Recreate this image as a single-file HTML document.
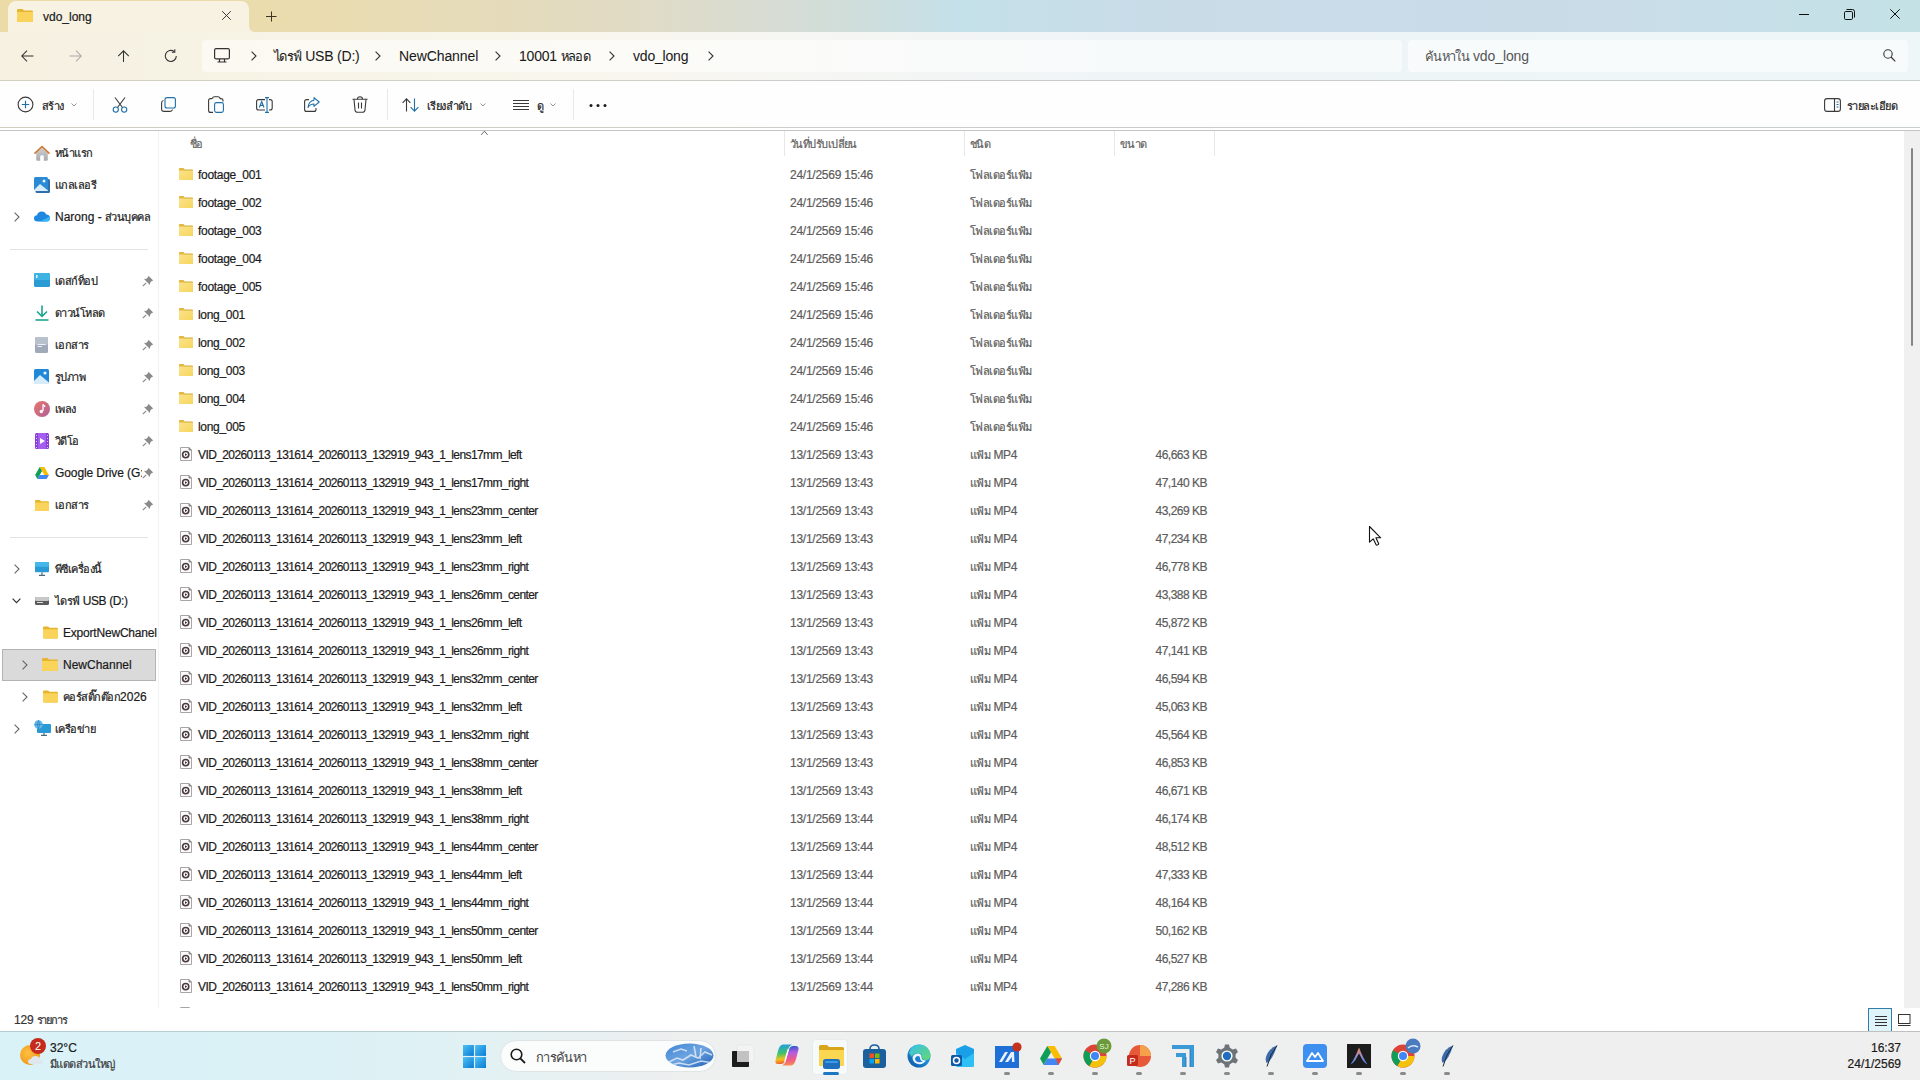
<!DOCTYPE html>
<html><head><meta charset="utf-8">
<style>
*{margin:0;padding:0;box-sizing:border-box}
html,body{width:1920px;height:1080px;overflow:hidden;background:#fff;font-family:"Liberation Sans",sans-serif;font-size:12px;color:#1a1a1a;-webkit-text-stroke:0.2px currentColor}
.abs{position:absolute}
i.t{font-style:normal;font-size:0.917em;letter-spacing:-0.05em}
#status i.t{letter-spacing:-1.1px}
#title{position:absolute;left:0;top:0;width:1920px;height:32px;background:linear-gradient(90deg,#ecdba6 0px,#eadcae 300px,#e2dbc2 600px,#dbdcce 720px,#cfdedc 860px,#c4e0e9 960px,#c8dce8 1150px,#cadbe8 1550px,#c6e0e8 1800px,#c4e2e6 1920px)}
#tab{position:absolute;left:8px;top:1px;width:241px;height:32px;background:#f7f2e2;border-radius:8px 8px 0 0}
#addr{position:absolute;left:0;top:32px;width:1920px;height:48px;background:linear-gradient(90deg,#f6f1e1 0px,#f7f3e5 250px,#f9f6ee 600px,#f5f6f4 850px,#eff4f6 1100px,#eef5f7 1500px,#eef6f8 1920px)}
#addrsep{position:absolute;left:0;top:80px;width:1920px;height:1px;background:linear-gradient(90deg,#d3d0bf 0%,#d0cfc6 30%,#c9cbcb 50%,#c8cfd1 100%)}
#addrbox{position:absolute;left:202px;top:40px;width:1200px;height:32px;background:rgba(255,255,255,0.5);border-radius:4px}
#searchbox{position:absolute;left:1408px;top:40px;width:500px;height:32px;background:rgba(255,255,255,0.6);border-radius:4px}
#cmd{position:absolute;left:0;top:81px;width:1920px;height:47px;background:#fefefe}
#cmdsep{position:absolute;left:0;top:127px;width:1920px;height:1px;background:linear-gradient(90deg,#d0cdbf 0%,#cfcec6 30%,#c9cccc 55%,#c8cecd 100%)}
#cmdsep2{position:absolute;left:0;top:130px;width:1920px;height:1px;background:#c4c4c4}
.vdiv{position:absolute;width:1px;background:#e8e8e8}
.row{position:absolute;left:160px;width:1740px;height:28px}
.row .fi{position:absolute;left:20px;top:7px}
.row span{position:absolute;top:1px;line-height:28px;white-space:nowrap}
.row .ff{left:19px;top:8px}
.row .nf{letter-spacing:-0.3px}
.tp{letter-spacing:-0.3px}
.tf{letter-spacing:-0.7px}
.nm{left:38px;color:#1b1b1b;letter-spacing:-0.6px}
.dt{left:630px;color:#5c5c5c;letter-spacing:-0.25px}
.tp{left:810px;color:#5c5c5c}
.sz{left:960px;width:87px;text-align:right;color:#5c5c5c;letter-spacing:-0.5px}
#list{position:absolute;left:159px;top:129px;width:1745px;height:879px;overflow:hidden}
#list .row{left:1px}
.hdr{position:absolute;top:135px;line-height:18px;color:#5f5f5f;font-size:12px}
.side{position:absolute;left:0;height:32px;line-height:32px;white-space:nowrap;font-size:12px;color:#1a1a1a}
#taskbar{position:absolute;left:0;top:1032px;width:1920px;height:48px;background:linear-gradient(90deg,#d9f2f8 0px,#dbf1f6 300px,#e0f1f4 450px,#e8f0f1 580px,#eeefef 680px,#efefef 1920px);}
#tbline{position:absolute;left:0;top:1031px;width:1920px;height:1px;background:linear-gradient(90deg,#b3cdd4 0px,#bccfd3 500px,#c2c6c7 800px,#c0c0c0 1920px)}
</style></head><body>

<div id="title"></div>
<div id="tab"></div>
<div class="abs" style="left:249px;top:26px;width:6px;height:6px;background:#f7f2e2"></div><div class="abs" style="left:249px;top:25px;width:6px;height:7px;background:#eadcae;border-bottom-left-radius:6px"></div>
<!-- tab folder icon -->
<svg class="abs" style="left:17px;top:9px" width="16" height="13" viewBox="0 0 16 13"><path d="M0 1.2 Q0 0 1.2 0 H5.5 L7 1.5 H14.8 Q16 1.5 16 2.7 V11.8 Q16 13 14.8 13 H1.2 Q0 13 0 11.8Z" fill="#e6b52e"/><path d="M0 3 H16 V11.8 Q16 13 14.8 13 H1.2 Q0 13 0 11.8Z" fill="#fad35a"/></svg>
<div class="abs" style="left:43px;top:9px;font-size:12px;line-height:16px;color:#1a1a1a">vdo_long</div>
<svg class="abs" style="left:221px;top:10px" width="11" height="11" viewBox="0 0 11 11"><path d="M1.2 1.2 L9.8 9.8 M9.8 1.2 L1.2 9.8" stroke="#2a2a2a" stroke-width="0.9"/></svg>
<svg class="abs" style="left:265px;top:11px" width="12" height="11" viewBox="0 0 12 11"><path d="M6.5 0.5 V10.5 M1 5.5 H11.5" stroke="#3a3520" stroke-width="1"/></svg>
<!-- window controls -->
<svg class="abs" style="left:1799px;top:13px" width="10" height="2" viewBox="0 0 10 2"><path d="M0 1.5 H10" stroke="#111" stroke-width="1"/></svg>
<svg class="abs" style="left:1844px;top:9px" width="11" height="11" viewBox="0 0 11 11"><rect x="0.5" y="2.5" width="8" height="8" rx="1.2" fill="none" stroke="#111" stroke-width="1"/><path d="M2.5 0.5 H8.5 Q10.5 0.5 10.5 2.5 V8.5" fill="none" stroke="#111" stroke-width="1"/></svg>
<svg class="abs" style="left:1890px;top:9px" width="10" height="10" viewBox="0 0 10 10"><path d="M0.3 0.3 L9.7 9.7 M9.7 0.3 L0.3 9.7" stroke="#111" stroke-width="1"/></svg>

<div id="addr"></div>
<div id="addrbox"></div>
<div id="searchbox"></div>
<div id="addrsep"></div>
<!-- nav icons -->
<svg class="abs" style="left:21px;top:50px" width="13" height="12" viewBox="0 0 13 12"><path d="M12.5 6 H1 M6 0.7 L0.8 6 L6 11.3" fill="none" stroke="#333" stroke-width="1.05"/></svg>
<svg class="abs" style="left:69px;top:50px" width="13" height="12" viewBox="0 0 13 12"><path d="M0.5 6 H12 M7 0.7 L12.2 6 L7 11.3" fill="none" stroke="#aaa" stroke-width="1.05"/></svg>
<svg class="abs" style="left:117px;top:50px" width="13" height="12" viewBox="0 0 13 12"><path d="M6.5 12 V1 M1.2 6.2 L6.5 0.8 L11.8 6.2" fill="none" stroke="#333" stroke-width="1.05"/></svg>
<svg class="abs" style="left:164px;top:49px" width="14" height="14" viewBox="0 0 14 14"><path d="M12.3 7 A5.5 5.5 0 1 1 10.2 2.6" fill="none" stroke="#333" stroke-width="1.1"/><path d="M10.8 0.3 V3.2 H7.9" fill="none" stroke="#333" stroke-width="1.1"/></svg>
<!-- addr pc icon -->
<svg class="abs" style="left:214px;top:48px" width="16" height="15" viewBox="0 0 16 15"><rect x="0.6" y="0.6" width="14.8" height="10.3" rx="1.5" fill="none" stroke="#333" stroke-width="1.2"/><path d="M5.5 11 V13.8 M10.5 11 V13.8 M3.5 14 H12.5" stroke="#333" stroke-width="1.2"/></svg>
<div id="crumbs" class="abs" style="left:0;top:46px;font-size:14px;line-height:20px;color:#1a1a1a;white-space:nowrap;-webkit-text-stroke:0.05px currentColor">
<span class="abs" style="left:274px;letter-spacing:-0.2px"><i class="t">ไดรฟ์</i> USB (D:)</span>
<span class="abs" style="left:399px;letter-spacing:-0.1px">NewChannel</span>
<span class="abs" style="left:519px;letter-spacing:-0.2px">10001 <i class="t">หลอด</i></span>
<span class="abs" style="left:633px;letter-spacing:-0.2px">vdo_long</span>
</div>
<svg class="abs" style="left:251px;top:51px" width="6" height="10" viewBox="0 0 6 10"><path d="M0.6 0.6 L5 5 L0.6 9.4" fill="none" stroke="#333" stroke-width="1.1"/></svg>
<svg class="abs" style="left:375px;top:51px" width="6" height="10" viewBox="0 0 6 10"><path d="M0.6 0.6 L5 5 L0.6 9.4" fill="none" stroke="#333" stroke-width="1.1"/></svg>
<svg class="abs" style="left:495px;top:51px" width="6" height="10" viewBox="0 0 6 10"><path d="M0.6 0.6 L5 5 L0.6 9.4" fill="none" stroke="#333" stroke-width="1.1"/></svg>
<svg class="abs" style="left:609px;top:51px" width="6" height="10" viewBox="0 0 6 10"><path d="M0.6 0.6 L5 5 L0.6 9.4" fill="none" stroke="#333" stroke-width="1.1"/></svg>
<svg class="abs" style="left:708px;top:51px" width="6" height="10" viewBox="0 0 6 10"><path d="M0.6 0.6 L5 5 L0.6 9.4" fill="none" stroke="#333" stroke-width="1.1"/></svg>
<div class="abs" style="left:1425px;top:46px;font-size:14px;line-height:20px;color:#555;white-space:nowrap;letter-spacing:-0.1px;-webkit-text-stroke:0"><i class="t">ค้นหาใน</i> vdo_long</div>
<svg class="abs" style="left:1883px;top:49px" width="13" height="13" viewBox="0 0 13 13"><circle cx="5" cy="5" r="4.2" fill="none" stroke="#333" stroke-width="1.1"/><path d="M8 8 L12.3 12.3" stroke="#333" stroke-width="1.2"/></svg>

<div id="cmd"></div>
<div id="cmdsep"></div><div id="cmdsep2"></div>
<div class="vdiv" style="left:93px;top:89px;height:31px"></div>
<div class="vdiv" style="left:387px;top:89px;height:31px"></div>
<div class="vdiv" style="left:573px;top:89px;height:31px"></div>
<!-- new -->
<svg class="abs" style="left:17px;top:96px" width="17" height="17" viewBox="0 0 17 17"><circle cx="8.5" cy="8.5" r="7.4" fill="none" stroke="#3a3a3a" stroke-width="1.1"/><path d="M8.5 4.8 V12.2 M4.8 8.5 H12.2" stroke="#1f6fa8" stroke-width="1.2"/></svg>
<div class="abs" style="left:42px;top:98px;font-size:12px;line-height:16px;color:#1a1a1a"><i class="t">สร้าง</i></div>
<svg class="abs" style="left:71px;top:103px" width="6" height="4" viewBox="0 0 6 4"><path d="M0.5 0.5 L3 3 L5.5 0.5" fill="none" stroke="#888" stroke-width="0.9"/></svg>
<!-- cut -->
<svg class="abs" style="left:112px;top:97px" width="16" height="16" viewBox="0 0 16 16"><path d="M3 0.5 L10.5 10.5 M13 0.5 L5.5 10.5" stroke="#3a3a3a" stroke-width="1.1" fill="none"/><circle cx="3.8" cy="12.6" r="2.6" fill="none" stroke="#1f6fa8" stroke-width="1.1"/><circle cx="12.2" cy="12.6" r="2.6" fill="none" stroke="#1f6fa8" stroke-width="1.1"/></svg>
<!-- copy -->
<svg class="abs" style="left:161px;top:97px" width="15" height="15" viewBox="0 0 15 15"><path d="M2.5 3.5 Q0.6 3.8 0.6 6 V12 Q0.6 14.4 3 14.4 H9 Q11.2 14.4 11.5 12.5" fill="none" stroke="#3a3a3a" stroke-width="1.1"/><rect x="4" y="0.6" width="10.4" height="10.4" rx="2" fill="none" stroke="#1f6fa8" stroke-width="1.1"/></svg>
<!-- paste -->
<svg class="abs" style="left:208px;top:96px" width="16" height="17" viewBox="0 0 16 17"><path d="M4 2.6 H2.6 Q0.6 2.6 0.6 4.6 V14.4 Q0.6 16.4 2.6 16.4 H5" fill="none" stroke="#3a3a3a" stroke-width="1.1"/><path d="M4.5 2.8 Q4.5 0.8 6.5 0.8 H10 Q12 0.8 12 2.8" fill="none" stroke="#3a3a3a" stroke-width="1.1"/><path d="M12 2.6 H13 Q15 2.6 15 4.6 V5.5" fill="none" stroke="#3a3a3a" stroke-width="1.1"/><rect x="6.6" y="6.6" width="8.8" height="9.8" rx="1.8" fill="none" stroke="#1f6fa8" stroke-width="1.1"/></svg>
<!-- rename -->
<svg class="abs" style="left:256px;top:97px" width="17" height="16" viewBox="0 0 17 16"><path d="M9 2.6 H2.6 Q0.6 2.6 0.6 4.6 V11 Q0.6 13 2.6 13 H9" fill="none" stroke="#3a3a3a" stroke-width="1.1"/><path d="M13 2.6 H14 Q16.2 2.6 16.2 4.6 V11 Q16.2 13 14 13 H13" fill="none" stroke="#3a3a3a" stroke-width="1.1"/><path d="M11 0.6 V15.4 M9 0.6 H13 M9 15.4 H13" stroke="#1f6fa8" stroke-width="1.1"/><path d="M3.3 10.5 L5.7 4.6 L8 10.5 M4.2 8.4 H7.2" fill="none" stroke="#1f6fa8" stroke-width="1.1"/></svg>
<!-- share -->
<svg class="abs" style="left:304px;top:97px" width="16" height="15" viewBox="0 0 16 15"><path d="M5 2.6 H2.6 Q0.6 2.6 0.6 4.6 V12.4 Q0.6 14.4 2.6 14.4 H10 Q12 14.4 12 12.4 V11" fill="none" stroke="#3a3a3a" stroke-width="1.1"/><path d="M10 0.6 L15.2 5 L10 9.4 V7 Q6 7 4 10.5 Q4.5 4 10 3.2Z" fill="none" stroke="#1f6fa8" stroke-width="1.1" stroke-linejoin="round"/></svg>
<!-- delete -->
<svg class="abs" style="left:352px;top:96px" width="16" height="17" viewBox="0 0 16 17"><path d="M0.5 3.2 H15.5 M5.5 3 Q5.5 0.7 8 0.7 Q10.5 0.7 10.5 3" fill="none" stroke="#3a3a3a" stroke-width="1.1"/><path d="M2 3.2 L3 14 Q3.2 16.3 5.5 16.3 H10.5 Q12.8 16.3 13 14 L14 3.2" fill="none" stroke="#3a3a3a" stroke-width="1.1"/><path d="M6.5 6.5 V12.5 M9.5 6.5 V12.5" stroke="#3a3a3a" stroke-width="1.1"/></svg>
<!-- sort -->
<svg class="abs" style="left:402px;top:98px" width="17" height="14" viewBox="0 0 17 14"><path d="M4.5 13.5 V1 M0.6 4.8 L4.5 0.8 L8.4 4.8" fill="none" stroke="#3a3a3a" stroke-width="1.1"/><path d="M12.5 0.5 V13 M8.6 9.2 L12.5 13.2 L16.4 9.2" fill="none" stroke="#1f6fa8" stroke-width="1.1"/></svg>
<div class="abs" style="left:427px;top:98px;font-size:12px;line-height:16px;color:#1a1a1a;letter-spacing:-0.3px"><i class="t">เรียงลำดับ</i></div>
<svg class="abs" style="left:480px;top:103px" width="6" height="4" viewBox="0 0 6 4"><path d="M0.5 0.5 L3 3 L5.5 0.5" fill="none" stroke="#888" stroke-width="0.9"/></svg>
<!-- view -->
<svg class="abs" style="left:513px;top:99px" width="16" height="12" viewBox="0 0 16 12"><path d="M0 1.5 H16 M0 4.5 H16 M0 7.5 H16 M0 10.5 H16" stroke="#3a3a3a" stroke-width="1"/></svg>
<div class="abs" style="left:537px;top:98px;font-size:12px;line-height:16px;color:#1a1a1a"><i class="t">ดู</i></div>
<svg class="abs" style="left:550px;top:103px" width="6" height="4" viewBox="0 0 6 4"><path d="M0.5 0.5 L3 3 L5.5 0.5" fill="none" stroke="#888" stroke-width="0.9"/></svg>
<!-- more -->
<svg class="abs" style="left:589px;top:103px" width="18" height="5" viewBox="0 0 18 5"><circle cx="2" cy="2.5" r="1.5" fill="#1a1a1a"/><circle cx="9" cy="2.5" r="1.5" fill="#1a1a1a"/><circle cx="16" cy="2.5" r="1.5" fill="#1a1a1a"/></svg>
<!-- details -->
<svg class="abs" style="left:1824px;top:98px" width="17" height="14" viewBox="0 0 17 14"><rect x="0.6" y="0.6" width="15.8" height="12.8" rx="2.5" fill="none" stroke="#3a3a3a" stroke-width="1.1"/><path d="M10.5 0.6 V13.4" stroke="#3a3a3a" stroke-width="1.1"/><path d="M12.5 4 H14.5 M12.5 6.5 H14.5 M12.5 9 H14.5" stroke="#1f6fa8" stroke-width="1"/></svg>
<div class="abs" style="left:1847px;top:98px;font-size:12px;line-height:16px;color:#1a1a1a;letter-spacing:-0.3px"><i class="t">รายละเอียด</i></div>


<!-- header -->
<div class="hdr" style="left:190px"><i class="t">ชื่อ</i></div>
<svg class="abs" style="left:480px;top:130px" width="9" height="6" viewBox="0 0 9 6"><path d="M1.2 4.8 L4.4 1.2 L7.6 4.8" fill="none" stroke="#555" stroke-width="0.9"/></svg>
<div class="hdr" style="left:790px"><i class="t">วันที่ปรับเปลี่ยน</i></div>
<div class="hdr" style="left:970px"><i class="t">ชนิด</i></div>
<div class="hdr" style="left:1120px"><i class="t">ขนาด</i></div>
<div class="vdiv" style="left:784px;top:131px;height:25px;background:#e8e8e8"></div>
<div class="vdiv" style="left:964px;top:131px;height:25px;background:#e8e8e8"></div>
<div class="vdiv" style="left:1114px;top:131px;height:25px;background:#e8e8e8"></div>
<div class="vdiv" style="left:1214px;top:131px;height:25px;background:#e8e8e8"></div>

<div id="list">
<div class="row" style="top:31px"><svg class="fi ff" width="14" height="12" viewBox="0 0 14 12"><defs><linearGradient id="fg" x1="0" y1="0" x2="1" y2="1"><stop offset="0" stop-color="#fbe28a"/><stop offset="1" stop-color="#f6d65e"/></linearGradient></defs><path d="M0 0.8 Q0 0 0.8 0 H4.6 L5.6 1.6 H13.2 Q14 1.6 14 2.4 V11.2 Q14 12 13.2 12 H0.8 Q0 12 0 11.2Z" fill="#e3b73e"/><path d="M0 2.6 H14 V11.2 Q14 12 13.2 12 H0.8 Q0 12 0 11.2Z" fill="url(#fg)"/><path d="M5.2 2.3 H14" stroke="#d6bf63" stroke-width="0.8"/></svg><span class="nm nf">footage_001</span><span class="dt">24/1/2569 15:46</span><span class="tp tf"><i class="t">โฟลเดอร์แฟ้ม</i></span><span class="sz"></span></div>
<div class="row" style="top:59px"><svg class="fi ff" width="14" height="12" viewBox="0 0 14 12"><defs><linearGradient id="fg" x1="0" y1="0" x2="1" y2="1"><stop offset="0" stop-color="#fbe28a"/><stop offset="1" stop-color="#f6d65e"/></linearGradient></defs><path d="M0 0.8 Q0 0 0.8 0 H4.6 L5.6 1.6 H13.2 Q14 1.6 14 2.4 V11.2 Q14 12 13.2 12 H0.8 Q0 12 0 11.2Z" fill="#e3b73e"/><path d="M0 2.6 H14 V11.2 Q14 12 13.2 12 H0.8 Q0 12 0 11.2Z" fill="url(#fg)"/><path d="M5.2 2.3 H14" stroke="#d6bf63" stroke-width="0.8"/></svg><span class="nm nf">footage_002</span><span class="dt">24/1/2569 15:46</span><span class="tp tf"><i class="t">โฟลเดอร์แฟ้ม</i></span><span class="sz"></span></div>
<div class="row" style="top:87px"><svg class="fi ff" width="14" height="12" viewBox="0 0 14 12"><defs><linearGradient id="fg" x1="0" y1="0" x2="1" y2="1"><stop offset="0" stop-color="#fbe28a"/><stop offset="1" stop-color="#f6d65e"/></linearGradient></defs><path d="M0 0.8 Q0 0 0.8 0 H4.6 L5.6 1.6 H13.2 Q14 1.6 14 2.4 V11.2 Q14 12 13.2 12 H0.8 Q0 12 0 11.2Z" fill="#e3b73e"/><path d="M0 2.6 H14 V11.2 Q14 12 13.2 12 H0.8 Q0 12 0 11.2Z" fill="url(#fg)"/><path d="M5.2 2.3 H14" stroke="#d6bf63" stroke-width="0.8"/></svg><span class="nm nf">footage_003</span><span class="dt">24/1/2569 15:46</span><span class="tp tf"><i class="t">โฟลเดอร์แฟ้ม</i></span><span class="sz"></span></div>
<div class="row" style="top:115px"><svg class="fi ff" width="14" height="12" viewBox="0 0 14 12"><defs><linearGradient id="fg" x1="0" y1="0" x2="1" y2="1"><stop offset="0" stop-color="#fbe28a"/><stop offset="1" stop-color="#f6d65e"/></linearGradient></defs><path d="M0 0.8 Q0 0 0.8 0 H4.6 L5.6 1.6 H13.2 Q14 1.6 14 2.4 V11.2 Q14 12 13.2 12 H0.8 Q0 12 0 11.2Z" fill="#e3b73e"/><path d="M0 2.6 H14 V11.2 Q14 12 13.2 12 H0.8 Q0 12 0 11.2Z" fill="url(#fg)"/><path d="M5.2 2.3 H14" stroke="#d6bf63" stroke-width="0.8"/></svg><span class="nm nf">footage_004</span><span class="dt">24/1/2569 15:46</span><span class="tp tf"><i class="t">โฟลเดอร์แฟ้ม</i></span><span class="sz"></span></div>
<div class="row" style="top:143px"><svg class="fi ff" width="14" height="12" viewBox="0 0 14 12"><defs><linearGradient id="fg" x1="0" y1="0" x2="1" y2="1"><stop offset="0" stop-color="#fbe28a"/><stop offset="1" stop-color="#f6d65e"/></linearGradient></defs><path d="M0 0.8 Q0 0 0.8 0 H4.6 L5.6 1.6 H13.2 Q14 1.6 14 2.4 V11.2 Q14 12 13.2 12 H0.8 Q0 12 0 11.2Z" fill="#e3b73e"/><path d="M0 2.6 H14 V11.2 Q14 12 13.2 12 H0.8 Q0 12 0 11.2Z" fill="url(#fg)"/><path d="M5.2 2.3 H14" stroke="#d6bf63" stroke-width="0.8"/></svg><span class="nm nf">footage_005</span><span class="dt">24/1/2569 15:46</span><span class="tp tf"><i class="t">โฟลเดอร์แฟ้ม</i></span><span class="sz"></span></div>
<div class="row" style="top:171px"><svg class="fi ff" width="14" height="12" viewBox="0 0 14 12"><defs><linearGradient id="fg" x1="0" y1="0" x2="1" y2="1"><stop offset="0" stop-color="#fbe28a"/><stop offset="1" stop-color="#f6d65e"/></linearGradient></defs><path d="M0 0.8 Q0 0 0.8 0 H4.6 L5.6 1.6 H13.2 Q14 1.6 14 2.4 V11.2 Q14 12 13.2 12 H0.8 Q0 12 0 11.2Z" fill="#e3b73e"/><path d="M0 2.6 H14 V11.2 Q14 12 13.2 12 H0.8 Q0 12 0 11.2Z" fill="url(#fg)"/><path d="M5.2 2.3 H14" stroke="#d6bf63" stroke-width="0.8"/></svg><span class="nm nf">long_001</span><span class="dt">24/1/2569 15:46</span><span class="tp tf"><i class="t">โฟลเดอร์แฟ้ม</i></span><span class="sz"></span></div>
<div class="row" style="top:199px"><svg class="fi ff" width="14" height="12" viewBox="0 0 14 12"><defs><linearGradient id="fg" x1="0" y1="0" x2="1" y2="1"><stop offset="0" stop-color="#fbe28a"/><stop offset="1" stop-color="#f6d65e"/></linearGradient></defs><path d="M0 0.8 Q0 0 0.8 0 H4.6 L5.6 1.6 H13.2 Q14 1.6 14 2.4 V11.2 Q14 12 13.2 12 H0.8 Q0 12 0 11.2Z" fill="#e3b73e"/><path d="M0 2.6 H14 V11.2 Q14 12 13.2 12 H0.8 Q0 12 0 11.2Z" fill="url(#fg)"/><path d="M5.2 2.3 H14" stroke="#d6bf63" stroke-width="0.8"/></svg><span class="nm nf">long_002</span><span class="dt">24/1/2569 15:46</span><span class="tp tf"><i class="t">โฟลเดอร์แฟ้ม</i></span><span class="sz"></span></div>
<div class="row" style="top:227px"><svg class="fi ff" width="14" height="12" viewBox="0 0 14 12"><defs><linearGradient id="fg" x1="0" y1="0" x2="1" y2="1"><stop offset="0" stop-color="#fbe28a"/><stop offset="1" stop-color="#f6d65e"/></linearGradient></defs><path d="M0 0.8 Q0 0 0.8 0 H4.6 L5.6 1.6 H13.2 Q14 1.6 14 2.4 V11.2 Q14 12 13.2 12 H0.8 Q0 12 0 11.2Z" fill="#e3b73e"/><path d="M0 2.6 H14 V11.2 Q14 12 13.2 12 H0.8 Q0 12 0 11.2Z" fill="url(#fg)"/><path d="M5.2 2.3 H14" stroke="#d6bf63" stroke-width="0.8"/></svg><span class="nm nf">long_003</span><span class="dt">24/1/2569 15:46</span><span class="tp tf"><i class="t">โฟลเดอร์แฟ้ม</i></span><span class="sz"></span></div>
<div class="row" style="top:255px"><svg class="fi ff" width="14" height="12" viewBox="0 0 14 12"><defs><linearGradient id="fg" x1="0" y1="0" x2="1" y2="1"><stop offset="0" stop-color="#fbe28a"/><stop offset="1" stop-color="#f6d65e"/></linearGradient></defs><path d="M0 0.8 Q0 0 0.8 0 H4.6 L5.6 1.6 H13.2 Q14 1.6 14 2.4 V11.2 Q14 12 13.2 12 H0.8 Q0 12 0 11.2Z" fill="#e3b73e"/><path d="M0 2.6 H14 V11.2 Q14 12 13.2 12 H0.8 Q0 12 0 11.2Z" fill="url(#fg)"/><path d="M5.2 2.3 H14" stroke="#d6bf63" stroke-width="0.8"/></svg><span class="nm nf">long_004</span><span class="dt">24/1/2569 15:46</span><span class="tp tf"><i class="t">โฟลเดอร์แฟ้ม</i></span><span class="sz"></span></div>
<div class="row" style="top:283px"><svg class="fi ff" width="14" height="12" viewBox="0 0 14 12"><defs><linearGradient id="fg" x1="0" y1="0" x2="1" y2="1"><stop offset="0" stop-color="#fbe28a"/><stop offset="1" stop-color="#f6d65e"/></linearGradient></defs><path d="M0 0.8 Q0 0 0.8 0 H4.6 L5.6 1.6 H13.2 Q14 1.6 14 2.4 V11.2 Q14 12 13.2 12 H0.8 Q0 12 0 11.2Z" fill="#e3b73e"/><path d="M0 2.6 H14 V11.2 Q14 12 13.2 12 H0.8 Q0 12 0 11.2Z" fill="url(#fg)"/><path d="M5.2 2.3 H14" stroke="#d6bf63" stroke-width="0.8"/></svg><span class="nm nf">long_005</span><span class="dt">24/1/2569 15:46</span><span class="tp tf"><i class="t">โฟลเดอร์แฟ้ม</i></span><span class="sz"></span></div>
<div class="row" style="top:311px"><svg class="fi" width="12" height="14" viewBox="0 0 12 14"><path d="M0.5 0.5 H9 L11.5 3 V13.5 H0.5Z" fill="#fdfbfd" stroke="#a6a6a6" stroke-width="1"/><path d="M9 0.5 V3 H11.5" fill="#888" stroke="#8a8a8a" stroke-width="1"/><circle cx="5.7" cy="7.6" r="3.1" fill="none" stroke="#4a3a3c" stroke-width="1.6"/><path d="M5 6.2 L7.2 7.6 L5 9Z" fill="#3a2c30"/></svg><span class="nm">VID_20260113_131614_20260113_132919_943_1_lens17mm_left</span><span class="dt">13/1/2569 13:43</span><span class="tp"><i class="t">แฟ้ม</i> MP4</span><span class="sz">46,663 KB</span></div>
<div class="row" style="top:339px"><svg class="fi" width="12" height="14" viewBox="0 0 12 14"><path d="M0.5 0.5 H9 L11.5 3 V13.5 H0.5Z" fill="#fdfbfd" stroke="#a6a6a6" stroke-width="1"/><path d="M9 0.5 V3 H11.5" fill="#888" stroke="#8a8a8a" stroke-width="1"/><circle cx="5.7" cy="7.6" r="3.1" fill="none" stroke="#4a3a3c" stroke-width="1.6"/><path d="M5 6.2 L7.2 7.6 L5 9Z" fill="#3a2c30"/></svg><span class="nm">VID_20260113_131614_20260113_132919_943_1_lens17mm_right</span><span class="dt">13/1/2569 13:43</span><span class="tp"><i class="t">แฟ้ม</i> MP4</span><span class="sz">47,140 KB</span></div>
<div class="row" style="top:367px"><svg class="fi" width="12" height="14" viewBox="0 0 12 14"><path d="M0.5 0.5 H9 L11.5 3 V13.5 H0.5Z" fill="#fdfbfd" stroke="#a6a6a6" stroke-width="1"/><path d="M9 0.5 V3 H11.5" fill="#888" stroke="#8a8a8a" stroke-width="1"/><circle cx="5.7" cy="7.6" r="3.1" fill="none" stroke="#4a3a3c" stroke-width="1.6"/><path d="M5 6.2 L7.2 7.6 L5 9Z" fill="#3a2c30"/></svg><span class="nm">VID_20260113_131614_20260113_132919_943_1_lens23mm_center</span><span class="dt">13/1/2569 13:43</span><span class="tp"><i class="t">แฟ้ม</i> MP4</span><span class="sz">43,269 KB</span></div>
<div class="row" style="top:395px"><svg class="fi" width="12" height="14" viewBox="0 0 12 14"><path d="M0.5 0.5 H9 L11.5 3 V13.5 H0.5Z" fill="#fdfbfd" stroke="#a6a6a6" stroke-width="1"/><path d="M9 0.5 V3 H11.5" fill="#888" stroke="#8a8a8a" stroke-width="1"/><circle cx="5.7" cy="7.6" r="3.1" fill="none" stroke="#4a3a3c" stroke-width="1.6"/><path d="M5 6.2 L7.2 7.6 L5 9Z" fill="#3a2c30"/></svg><span class="nm">VID_20260113_131614_20260113_132919_943_1_lens23mm_left</span><span class="dt">13/1/2569 13:43</span><span class="tp"><i class="t">แฟ้ม</i> MP4</span><span class="sz">47,234 KB</span></div>
<div class="row" style="top:423px"><svg class="fi" width="12" height="14" viewBox="0 0 12 14"><path d="M0.5 0.5 H9 L11.5 3 V13.5 H0.5Z" fill="#fdfbfd" stroke="#a6a6a6" stroke-width="1"/><path d="M9 0.5 V3 H11.5" fill="#888" stroke="#8a8a8a" stroke-width="1"/><circle cx="5.7" cy="7.6" r="3.1" fill="none" stroke="#4a3a3c" stroke-width="1.6"/><path d="M5 6.2 L7.2 7.6 L5 9Z" fill="#3a2c30"/></svg><span class="nm">VID_20260113_131614_20260113_132919_943_1_lens23mm_right</span><span class="dt">13/1/2569 13:43</span><span class="tp"><i class="t">แฟ้ม</i> MP4</span><span class="sz">46,778 KB</span></div>
<div class="row" style="top:451px"><svg class="fi" width="12" height="14" viewBox="0 0 12 14"><path d="M0.5 0.5 H9 L11.5 3 V13.5 H0.5Z" fill="#fdfbfd" stroke="#a6a6a6" stroke-width="1"/><path d="M9 0.5 V3 H11.5" fill="#888" stroke="#8a8a8a" stroke-width="1"/><circle cx="5.7" cy="7.6" r="3.1" fill="none" stroke="#4a3a3c" stroke-width="1.6"/><path d="M5 6.2 L7.2 7.6 L5 9Z" fill="#3a2c30"/></svg><span class="nm">VID_20260113_131614_20260113_132919_943_1_lens26mm_center</span><span class="dt">13/1/2569 13:43</span><span class="tp"><i class="t">แฟ้ม</i> MP4</span><span class="sz">43,388 KB</span></div>
<div class="row" style="top:479px"><svg class="fi" width="12" height="14" viewBox="0 0 12 14"><path d="M0.5 0.5 H9 L11.5 3 V13.5 H0.5Z" fill="#fdfbfd" stroke="#a6a6a6" stroke-width="1"/><path d="M9 0.5 V3 H11.5" fill="#888" stroke="#8a8a8a" stroke-width="1"/><circle cx="5.7" cy="7.6" r="3.1" fill="none" stroke="#4a3a3c" stroke-width="1.6"/><path d="M5 6.2 L7.2 7.6 L5 9Z" fill="#3a2c30"/></svg><span class="nm">VID_20260113_131614_20260113_132919_943_1_lens26mm_left</span><span class="dt">13/1/2569 13:43</span><span class="tp"><i class="t">แฟ้ม</i> MP4</span><span class="sz">45,872 KB</span></div>
<div class="row" style="top:507px"><svg class="fi" width="12" height="14" viewBox="0 0 12 14"><path d="M0.5 0.5 H9 L11.5 3 V13.5 H0.5Z" fill="#fdfbfd" stroke="#a6a6a6" stroke-width="1"/><path d="M9 0.5 V3 H11.5" fill="#888" stroke="#8a8a8a" stroke-width="1"/><circle cx="5.7" cy="7.6" r="3.1" fill="none" stroke="#4a3a3c" stroke-width="1.6"/><path d="M5 6.2 L7.2 7.6 L5 9Z" fill="#3a2c30"/></svg><span class="nm">VID_20260113_131614_20260113_132919_943_1_lens26mm_right</span><span class="dt">13/1/2569 13:43</span><span class="tp"><i class="t">แฟ้ม</i> MP4</span><span class="sz">47,141 KB</span></div>
<div class="row" style="top:535px"><svg class="fi" width="12" height="14" viewBox="0 0 12 14"><path d="M0.5 0.5 H9 L11.5 3 V13.5 H0.5Z" fill="#fdfbfd" stroke="#a6a6a6" stroke-width="1"/><path d="M9 0.5 V3 H11.5" fill="#888" stroke="#8a8a8a" stroke-width="1"/><circle cx="5.7" cy="7.6" r="3.1" fill="none" stroke="#4a3a3c" stroke-width="1.6"/><path d="M5 6.2 L7.2 7.6 L5 9Z" fill="#3a2c30"/></svg><span class="nm">VID_20260113_131614_20260113_132919_943_1_lens32mm_center</span><span class="dt">13/1/2569 13:43</span><span class="tp"><i class="t">แฟ้ม</i> MP4</span><span class="sz">46,594 KB</span></div>
<div class="row" style="top:563px"><svg class="fi" width="12" height="14" viewBox="0 0 12 14"><path d="M0.5 0.5 H9 L11.5 3 V13.5 H0.5Z" fill="#fdfbfd" stroke="#a6a6a6" stroke-width="1"/><path d="M9 0.5 V3 H11.5" fill="#888" stroke="#8a8a8a" stroke-width="1"/><circle cx="5.7" cy="7.6" r="3.1" fill="none" stroke="#4a3a3c" stroke-width="1.6"/><path d="M5 6.2 L7.2 7.6 L5 9Z" fill="#3a2c30"/></svg><span class="nm">VID_20260113_131614_20260113_132919_943_1_lens32mm_left</span><span class="dt">13/1/2569 13:43</span><span class="tp"><i class="t">แฟ้ม</i> MP4</span><span class="sz">45,063 KB</span></div>
<div class="row" style="top:591px"><svg class="fi" width="12" height="14" viewBox="0 0 12 14"><path d="M0.5 0.5 H9 L11.5 3 V13.5 H0.5Z" fill="#fdfbfd" stroke="#a6a6a6" stroke-width="1"/><path d="M9 0.5 V3 H11.5" fill="#888" stroke="#8a8a8a" stroke-width="1"/><circle cx="5.7" cy="7.6" r="3.1" fill="none" stroke="#4a3a3c" stroke-width="1.6"/><path d="M5 6.2 L7.2 7.6 L5 9Z" fill="#3a2c30"/></svg><span class="nm">VID_20260113_131614_20260113_132919_943_1_lens32mm_right</span><span class="dt">13/1/2569 13:43</span><span class="tp"><i class="t">แฟ้ม</i> MP4</span><span class="sz">45,564 KB</span></div>
<div class="row" style="top:619px"><svg class="fi" width="12" height="14" viewBox="0 0 12 14"><path d="M0.5 0.5 H9 L11.5 3 V13.5 H0.5Z" fill="#fdfbfd" stroke="#a6a6a6" stroke-width="1"/><path d="M9 0.5 V3 H11.5" fill="#888" stroke="#8a8a8a" stroke-width="1"/><circle cx="5.7" cy="7.6" r="3.1" fill="none" stroke="#4a3a3c" stroke-width="1.6"/><path d="M5 6.2 L7.2 7.6 L5 9Z" fill="#3a2c30"/></svg><span class="nm">VID_20260113_131614_20260113_132919_943_1_lens38mm_center</span><span class="dt">13/1/2569 13:43</span><span class="tp"><i class="t">แฟ้ม</i> MP4</span><span class="sz">46,853 KB</span></div>
<div class="row" style="top:647px"><svg class="fi" width="12" height="14" viewBox="0 0 12 14"><path d="M0.5 0.5 H9 L11.5 3 V13.5 H0.5Z" fill="#fdfbfd" stroke="#a6a6a6" stroke-width="1"/><path d="M9 0.5 V3 H11.5" fill="#888" stroke="#8a8a8a" stroke-width="1"/><circle cx="5.7" cy="7.6" r="3.1" fill="none" stroke="#4a3a3c" stroke-width="1.6"/><path d="M5 6.2 L7.2 7.6 L5 9Z" fill="#3a2c30"/></svg><span class="nm">VID_20260113_131614_20260113_132919_943_1_lens38mm_left</span><span class="dt">13/1/2569 13:43</span><span class="tp"><i class="t">แฟ้ม</i> MP4</span><span class="sz">46,671 KB</span></div>
<div class="row" style="top:675px"><svg class="fi" width="12" height="14" viewBox="0 0 12 14"><path d="M0.5 0.5 H9 L11.5 3 V13.5 H0.5Z" fill="#fdfbfd" stroke="#a6a6a6" stroke-width="1"/><path d="M9 0.5 V3 H11.5" fill="#888" stroke="#8a8a8a" stroke-width="1"/><circle cx="5.7" cy="7.6" r="3.1" fill="none" stroke="#4a3a3c" stroke-width="1.6"/><path d="M5 6.2 L7.2 7.6 L5 9Z" fill="#3a2c30"/></svg><span class="nm">VID_20260113_131614_20260113_132919_943_1_lens38mm_right</span><span class="dt">13/1/2569 13:44</span><span class="tp"><i class="t">แฟ้ม</i> MP4</span><span class="sz">46,174 KB</span></div>
<div class="row" style="top:703px"><svg class="fi" width="12" height="14" viewBox="0 0 12 14"><path d="M0.5 0.5 H9 L11.5 3 V13.5 H0.5Z" fill="#fdfbfd" stroke="#a6a6a6" stroke-width="1"/><path d="M9 0.5 V3 H11.5" fill="#888" stroke="#8a8a8a" stroke-width="1"/><circle cx="5.7" cy="7.6" r="3.1" fill="none" stroke="#4a3a3c" stroke-width="1.6"/><path d="M5 6.2 L7.2 7.6 L5 9Z" fill="#3a2c30"/></svg><span class="nm">VID_20260113_131614_20260113_132919_943_1_lens44mm_center</span><span class="dt">13/1/2569 13:44</span><span class="tp"><i class="t">แฟ้ม</i> MP4</span><span class="sz">48,512 KB</span></div>
<div class="row" style="top:731px"><svg class="fi" width="12" height="14" viewBox="0 0 12 14"><path d="M0.5 0.5 H9 L11.5 3 V13.5 H0.5Z" fill="#fdfbfd" stroke="#a6a6a6" stroke-width="1"/><path d="M9 0.5 V3 H11.5" fill="#888" stroke="#8a8a8a" stroke-width="1"/><circle cx="5.7" cy="7.6" r="3.1" fill="none" stroke="#4a3a3c" stroke-width="1.6"/><path d="M5 6.2 L7.2 7.6 L5 9Z" fill="#3a2c30"/></svg><span class="nm">VID_20260113_131614_20260113_132919_943_1_lens44mm_left</span><span class="dt">13/1/2569 13:44</span><span class="tp"><i class="t">แฟ้ม</i> MP4</span><span class="sz">47,333 KB</span></div>
<div class="row" style="top:759px"><svg class="fi" width="12" height="14" viewBox="0 0 12 14"><path d="M0.5 0.5 H9 L11.5 3 V13.5 H0.5Z" fill="#fdfbfd" stroke="#a6a6a6" stroke-width="1"/><path d="M9 0.5 V3 H11.5" fill="#888" stroke="#8a8a8a" stroke-width="1"/><circle cx="5.7" cy="7.6" r="3.1" fill="none" stroke="#4a3a3c" stroke-width="1.6"/><path d="M5 6.2 L7.2 7.6 L5 9Z" fill="#3a2c30"/></svg><span class="nm">VID_20260113_131614_20260113_132919_943_1_lens44mm_right</span><span class="dt">13/1/2569 13:44</span><span class="tp"><i class="t">แฟ้ม</i> MP4</span><span class="sz">48,164 KB</span></div>
<div class="row" style="top:787px"><svg class="fi" width="12" height="14" viewBox="0 0 12 14"><path d="M0.5 0.5 H9 L11.5 3 V13.5 H0.5Z" fill="#fdfbfd" stroke="#a6a6a6" stroke-width="1"/><path d="M9 0.5 V3 H11.5" fill="#888" stroke="#8a8a8a" stroke-width="1"/><circle cx="5.7" cy="7.6" r="3.1" fill="none" stroke="#4a3a3c" stroke-width="1.6"/><path d="M5 6.2 L7.2 7.6 L5 9Z" fill="#3a2c30"/></svg><span class="nm">VID_20260113_131614_20260113_132919_943_1_lens50mm_center</span><span class="dt">13/1/2569 13:44</span><span class="tp"><i class="t">แฟ้ม</i> MP4</span><span class="sz">50,162 KB</span></div>
<div class="row" style="top:815px"><svg class="fi" width="12" height="14" viewBox="0 0 12 14"><path d="M0.5 0.5 H9 L11.5 3 V13.5 H0.5Z" fill="#fdfbfd" stroke="#a6a6a6" stroke-width="1"/><path d="M9 0.5 V3 H11.5" fill="#888" stroke="#8a8a8a" stroke-width="1"/><circle cx="5.7" cy="7.6" r="3.1" fill="none" stroke="#4a3a3c" stroke-width="1.6"/><path d="M5 6.2 L7.2 7.6 L5 9Z" fill="#3a2c30"/></svg><span class="nm">VID_20260113_131614_20260113_132919_943_1_lens50mm_left</span><span class="dt">13/1/2569 13:44</span><span class="tp"><i class="t">แฟ้ม</i> MP4</span><span class="sz">46,527 KB</span></div>
<div class="row" style="top:843px"><svg class="fi" width="12" height="14" viewBox="0 0 12 14"><path d="M0.5 0.5 H9 L11.5 3 V13.5 H0.5Z" fill="#fdfbfd" stroke="#a6a6a6" stroke-width="1"/><path d="M9 0.5 V3 H11.5" fill="#888" stroke="#8a8a8a" stroke-width="1"/><circle cx="5.7" cy="7.6" r="3.1" fill="none" stroke="#4a3a3c" stroke-width="1.6"/><path d="M5 6.2 L7.2 7.6 L5 9Z" fill="#3a2c30"/></svg><span class="nm">VID_20260113_131614_20260113_132919_943_1_lens50mm_right</span><span class="dt">13/1/2569 13:44</span><span class="tp"><i class="t">แฟ้ม</i> MP4</span><span class="sz">47,286 KB</span></div>
<div class="row" style="top:871px"><svg class="fi" width="12" height="14" viewBox="0 0 12 14"><path d="M0.5 0.5 H9 L11.5 3 V13.5 H0.5Z" fill="#fdfbfd" stroke="#a6a6a6" stroke-width="1"/><path d="M9 0.5 V3 H11.5" fill="#888" stroke="#8a8a8a" stroke-width="1"/><circle cx="5.7" cy="7.6" r="3.1" fill="none" stroke="#4a3a3c" stroke-width="1.6"/><path d="M5 6.2 L7.2 7.6 L5 9Z" fill="#3a2c30"/></svg><span class="nm">VID_20260113_131614_20260113_132919_943_1_lens56mm_center</span><span class="dt">13/1/2569 13:44</span><span class="tp"><i class="t">แฟ้ม</i> MP4</span><span class="sz">47,000 KB</span></div>
</div>

<!-- sidebar divider -->
<div class="vdiv" style="left:158px;top:131px;height:877px;background:#f2f2f4"></div>
<!-- sidebar -->
<svg class="abs" style="left:34px;top:145px" width="16" height="16" viewBox="0 0 16 16"><defs><linearGradient id="hb" x1="0" y1="0" x2="0" y2="1"><stop offset="0" stop-color="#d2d2d2"/><stop offset="1" stop-color="#a9a9a9"/></linearGradient></defs><path d="M2.2 7.2 V14.5 Q2.2 15.8 3.5 15.8 H6.2 V11.5 Q6.2 10.3 8 10.3 Q9.8 10.3 9.8 11.5 V15.8 H12.5 Q13.8 15.8 13.8 14.5 V7.2 L8 2Z" fill="url(#hb)"/><path d="M1 8.2 L8 1.5 L15 8.2" fill="none" stroke="#d07a34" stroke-width="1.6" stroke-linejoin="round" stroke-linecap="round"/></svg>
<div class="side" style="top:137px;left:55px"><i class="t">หน้าแรก</i></div>
<svg class="abs" style="left:34px;top:177px" width="16" height="16" viewBox="0 0 16 16"><rect x="1.5" y="2" width="14.5" height="14" rx="1.5" fill="#2f6fae"/><rect x="0" y="0" width="14" height="14" rx="1.5" fill="#2a8ad6"/><path d="M0 13 L6 7 L14 13.5 V14 H0Z" fill="#d8ecfa"/><circle cx="10" cy="4" r="1.5" fill="#e8f4fc"/></svg>
<div class="side" style="top:169px;left:55px"><i class="t">แกลเลอรี</i></div>
<svg class="abs" style="left:14px;top:212px" width="6" height="10" viewBox="0 0 6 10"><path d="M0.6 0.6 L5 5 L0.6 9.4" fill="none" stroke="#666" stroke-width="1.1"/></svg>
<svg class="abs" style="left:34px;top:211px" width="16" height="11" viewBox="0 0 16 11"><path d="M3.5 10.5 Q0 10.5 0 7.3 Q0 4.5 3 4.2 Q4 0.5 7.8 0.5 Q11 0.5 12.3 3.5 Q16 3.8 16 7.2 Q16 10.5 12.5 10.5Z" fill="#1e88e0"/><path d="M6 10.5 L16 5.5 Q16.2 10.5 12.5 10.5Z" fill="#35b8f5"/></svg>
<div class="side" style="top:201px;left:55px">Narong - <i class="t">ส่วนบุคคล</i></div>
<div class="abs" style="left:10px;top:249px;width:138px;height:1px;background:#e3e3e3"></div>

<svg class="abs" style="left:34px;top:273px" width="16" height="14" viewBox="0 0 16 14"><rect x="0" y="0" width="16" height="14" rx="1.5" fill="#2a9bd3"/><rect x="0" y="0" width="16" height="7" rx="1.5" fill="#3fb2e4"/><rect x="2" y="2" width="1.5" height="3" fill="#e6f5fc"/></svg>
<div class="side" style="top:265px;left:55px"><i class="t">เดสก์ท็อป</i></div>
<svg class="abs" style="left:35px;top:305px" width="14" height="16" viewBox="0 0 14 16"><path d="M7 0.5 V11 M2 6.5 L7 11.3 L12 6.5" fill="none" stroke="#1ba58f" stroke-width="1.6"/><path d="M0.5 15 H13.5" stroke="#1ba58f" stroke-width="1.6"/></svg>
<div class="side" style="top:297px;left:55px"><i class="t">ดาวน์โหลด</i></div>
<svg class="abs" style="left:35px;top:337px" width="13" height="16" viewBox="0 0 13 16"><rect x="0" y="0" width="13" height="16" rx="1.5" fill="#9fa9b8"/><rect x="0" y="0" width="13" height="8" rx="1.5" fill="#b8c0cc"/><path d="M2.5 7.5 H10.5 M2.5 9.5 H7" stroke="#eef" stroke-width="1.2"/></svg>
<div class="side" style="top:329px;left:55px"><i class="t">เอกสาร</i></div>
<svg class="abs" style="left:34px;top:369px" width="15" height="15" viewBox="0 0 15 15"><rect x="0" y="0" width="15" height="15" rx="1.5" fill="#2088d8"/><path d="M0 12 L6 6 L15 13.5 V15 H0Z" fill="#d6ecfb"/><circle cx="11" cy="4" r="1.6" fill="#e8f4fc"/></svg>
<div class="side" style="top:361px;left:55px"><i class="t">รูปภาพ</i></div>
<svg class="abs" style="left:34px;top:401px" width="16" height="16" viewBox="0 0 16 16"><defs><linearGradient id="mg" x1="0" y1="0" x2="1" y2="1"><stop offset="0" stop-color="#e8766a"/><stop offset="1" stop-color="#b0609a"/></linearGradient></defs><circle cx="8" cy="8" r="8" fill="url(#mg)"/><path d="M9 3.5 V10" stroke="#fff" stroke-width="1.3"/><circle cx="7.3" cy="10.5" r="1.7" fill="#fff"/><path d="M9 3.5 Q10.5 4.5 11 6" fill="none" stroke="#fff" stroke-width="1.2"/></svg>
<div class="side" style="top:393px;left:55px"><i class="t">เพลง</i></div>
<svg class="abs" style="left:35px;top:433px" width="14" height="16" viewBox="0 0 14 16"><rect x="0" y="0" width="14" height="16" rx="1.5" fill="#8a3fd8"/><rect x="3" y="0" width="8" height="16" fill="#a45ef0"/><path d="M5 5 L10 8 L5 11Z" fill="#fff"/><path d="M1.5 2 V3 M1.5 5 V6 M1.5 8 V9 M1.5 11 V12 M1.5 14 V15 M12.5 2 V3 M12.5 5 V6 M12.5 8 V9 M12.5 11 V12 M12.5 14 V15" stroke="#e0c8ff" stroke-width="1"/></svg>
<div class="side" style="top:425px;left:55px"><i class="t">วิดีโอ</i></div>
<svg class="abs" style="left:35px;top:467px" width="14" height="12" viewBox="0 0 16 14"><path d="M5.3 0 H10.7 L16 9.2 L13.3 14 L8 4.6Z" fill="#fbbc04"/><path d="M5.3 0 L8 4.6 L2.7 14 L0 9.2Z" fill="#0f9d58"/><path d="M2.7 14 H13.3 L16 9.2 H5.3Z" fill="#4285f4"/></svg>
<div class="side" style="top:457px;left:55px;width:87px;overflow:hidden;letter-spacing:-0.1px">Google Drive (G:</div>
<svg class="abs" style="left:35px;top:500px" width="14" height="11" viewBox="0 0 16 13" preserveAspectRatio="none"><path d="M0 1.2 Q0 0 1.2 0 H5.5 L7 1.5 H14.8 Q16 1.5 16 2.7 V11.8 Q16 13 14.8 13 H1.2 Q0 13 0 11.8Z" fill="#e6b52e"/><path d="M0 3 H16 V11.8 Q16 13 14.8 13 H1.2 Q0 13 0 11.8Z" fill="#fad35a"/></svg>
<div class="side" style="top:489px;left:55px"><i class="t">เอกสาร</i></div>
<svg class="abs" style="left:142px;top:275px" width="12" height="12" viewBox="0 0 12 12"><path d="M6.5 0.8 L11.2 5.5 L9.8 6 L8.2 7.6 L8 10 L2 4 L4.4 3.8 L6 2.2Z" fill="#8a8a8a"/><path d="M4.2 7.8 L0.8 11.2" stroke="#8a8a8a" stroke-width="1.2"/></svg>
<svg class="abs" style="left:142px;top:307px" width="12" height="12" viewBox="0 0 12 12"><path d="M6.5 0.8 L11.2 5.5 L9.8 6 L8.2 7.6 L8 10 L2 4 L4.4 3.8 L6 2.2Z" fill="#8a8a8a"/><path d="M4.2 7.8 L0.8 11.2" stroke="#8a8a8a" stroke-width="1.2"/></svg>
<svg class="abs" style="left:142px;top:339px" width="12" height="12" viewBox="0 0 12 12"><path d="M6.5 0.8 L11.2 5.5 L9.8 6 L8.2 7.6 L8 10 L2 4 L4.4 3.8 L6 2.2Z" fill="#8a8a8a"/><path d="M4.2 7.8 L0.8 11.2" stroke="#8a8a8a" stroke-width="1.2"/></svg>
<svg class="abs" style="left:142px;top:371px" width="12" height="12" viewBox="0 0 12 12"><path d="M6.5 0.8 L11.2 5.5 L9.8 6 L8.2 7.6 L8 10 L2 4 L4.4 3.8 L6 2.2Z" fill="#8a8a8a"/><path d="M4.2 7.8 L0.8 11.2" stroke="#8a8a8a" stroke-width="1.2"/></svg>
<svg class="abs" style="left:142px;top:403px" width="12" height="12" viewBox="0 0 12 12"><path d="M6.5 0.8 L11.2 5.5 L9.8 6 L8.2 7.6 L8 10 L2 4 L4.4 3.8 L6 2.2Z" fill="#8a8a8a"/><path d="M4.2 7.8 L0.8 11.2" stroke="#8a8a8a" stroke-width="1.2"/></svg>
<svg class="abs" style="left:142px;top:435px" width="12" height="12" viewBox="0 0 12 12"><path d="M6.5 0.8 L11.2 5.5 L9.8 6 L8.2 7.6 L8 10 L2 4 L4.4 3.8 L6 2.2Z" fill="#8a8a8a"/><path d="M4.2 7.8 L0.8 11.2" stroke="#8a8a8a" stroke-width="1.2"/></svg>
<svg class="abs" style="left:142px;top:467px" width="12" height="12" viewBox="0 0 12 12"><path d="M6.5 0.8 L11.2 5.5 L9.8 6 L8.2 7.6 L8 10 L2 4 L4.4 3.8 L6 2.2Z" fill="#8a8a8a"/><path d="M4.2 7.8 L0.8 11.2" stroke="#8a8a8a" stroke-width="1.2"/></svg>
<svg class="abs" style="left:142px;top:499px" width="12" height="12" viewBox="0 0 12 12"><path d="M6.5 0.8 L11.2 5.5 L9.8 6 L8.2 7.6 L8 10 L2 4 L4.4 3.8 L6 2.2Z" fill="#8a8a8a"/><path d="M4.2 7.8 L0.8 11.2" stroke="#8a8a8a" stroke-width="1.2"/></svg>

<div class="abs" style="left:10px;top:537px;width:138px;height:1px;background:#e3e3e3"></div>

<svg class="abs" style="left:14px;top:564px" width="6" height="10" viewBox="0 0 6 10"><path d="M0.6 0.6 L5 5 L0.6 9.4" fill="none" stroke="#666" stroke-width="1.1"/></svg>
<svg class="abs" style="left:35px;top:562px" width="14" height="14" viewBox="0 0 16 15" preserveAspectRatio="none"><rect x="0" y="0" width="16" height="11" rx="1" fill="#2a9ad6"/><rect x="0" y="0" width="16" height="5" rx="1" fill="#44b6e8"/><path d="M8 11 V14 M4.5 14.3 H11.5" stroke="#4a6a80" stroke-width="1.3"/></svg>
<div class="side" style="top:553px;left:55px"><i class="t">พีซีเครื่องนี้</i></div>
<svg class="abs" style="left:12px;top:598px" width="9" height="6" viewBox="0 0 9 6"><path d="M0.6 0.6 L4.5 4.7 L8.4 0.6" fill="none" stroke="#333" stroke-width="1.2"/></svg>
<svg class="abs" style="left:35px;top:596px" width="14" height="9" viewBox="0 0 14 9"><rect x="0" y="1" width="14" height="8" rx="1.5" fill="#5a5a5a"/><rect x="0" y="1" width="14" height="4" rx="1.5" fill="#c8c8c8"/><rect x="2" y="6" width="6" height="1" fill="#ddd"/></svg>
<div class="side" style="top:585px;left:55px;letter-spacing:-0.4px"><i class="t">ไดรฟ์</i> USB (D:)</div>
<svg class="abs" style="left:43px;top:626px" width="15" height="13" viewBox="0 0 16 13"><path d="M0 1.2 Q0 0 1.2 0 H5.5 L7 1.5 H14.8 Q16 1.5 16 2.7 V11.8 Q16 13 14.8 13 H1.2 Q0 13 0 11.8Z" fill="#e6b52e"/><path d="M0 3 H16 V11.8 Q16 13 14.8 13 H1.2 Q0 13 0 11.8Z" fill="#fad35a"/></svg>
<div class="side" style="top:617px;left:63px;width:95px;overflow:hidden;letter-spacing:-0.2px">ExportNewChanel</div>
<div class="abs" style="left:2px;top:649px;width:154px;height:32px;background:#dadada;border:1px solid #b3b3b3"></div>
<svg class="abs" style="left:22px;top:660px" width="6" height="10" viewBox="0 0 6 10"><path d="M0.6 0.6 L5 5 L0.6 9.4" fill="none" stroke="#666" stroke-width="1.1"/></svg>
<svg class="abs" style="left:42px;top:658px" width="16" height="13" viewBox="0 0 16 13"><path d="M0 1.2 Q0 0 1.2 0 H5.5 L7 1.5 H14.8 Q16 1.5 16 2.7 V11.8 Q16 13 14.8 13 H1.2 Q0 13 0 11.8Z" fill="#e6b52e"/><path d="M0 3 H16 V11.8 Q16 13 14.8 13 H1.2 Q0 13 0 11.8Z" fill="#fad35a"/></svg>
<div class="side" style="top:649px;left:63px">NewChannel</div>
<svg class="abs" style="left:22px;top:692px" width="6" height="10" viewBox="0 0 6 10"><path d="M0.6 0.6 L5 5 L0.6 9.4" fill="none" stroke="#666" stroke-width="1.1"/></svg>
<svg class="abs" style="left:43px;top:690px" width="15" height="13" viewBox="0 0 16 13"><path d="M0 1.2 Q0 0 1.2 0 H5.5 L7 1.5 H14.8 Q16 1.5 16 2.7 V11.8 Q16 13 14.8 13 H1.2 Q0 13 0 11.8Z" fill="#e6b52e"/><path d="M0 3 H16 V11.8 Q16 13 14.8 13 H1.2 Q0 13 0 11.8Z" fill="#fad35a"/></svg>
<div class="side" style="top:681px;left:63px"><i class="t">คอร์สติ๊กต๊อก</i>2026</div>
<svg class="abs" style="left:14px;top:724px" width="6" height="10" viewBox="0 0 6 10"><path d="M0.6 0.6 L5 5 L0.6 9.4" fill="none" stroke="#666" stroke-width="1.1"/></svg>
<svg class="abs" style="left:34px;top:720px" width="17" height="16" viewBox="0 0 17 16"><rect x="3" y="4" width="14" height="9" rx="1" fill="#2a9ad6"/><path d="M10 13 V15 M7 15.3 H13" stroke="#4a6a80" stroke-width="1.2"/><circle cx="4.5" cy="4.5" r="4.3" fill="#5fb8ea"/><path d="M0.5 4.5 H8.5 M4.5 0.3 Q2 4.5 4.5 8.7 Q7 4.5 4.5 0.3" fill="none" stroke="#2a7ab0" stroke-width="0.6"/></svg>
<div class="side" style="top:713px;left:55px"><i class="t">เครือข่าย</i></div>


<!-- scrollbar -->
<div class="abs" style="left:1904px;top:131px;width:16px;height:877px;background:#f0f0f0"></div>
<div class="abs" style="left:1911px;top:148px;width:2px;height:198px;background:#858585;border-radius:1px"></div>

<!-- status -->
<div id="status" class="abs" style="left:14px;top:1012px;line-height:16px;font-size:12px;color:#333;letter-spacing:-0.2px">129 <i class="t">รายการ</i></div>
<div class="abs" style="left:1868px;top:1008px;width:24px;height:24px;background:#def3fa;border:1px solid #2f7ea6"></div>
<svg class="abs" style="left:1875px;top:1014px" width="12" height="13" viewBox="0 0 12 13"><path d="M0 2.5 H12 M0 5.5 H12 M0 8.5 H12 M0 11.5 H12" stroke="#333" stroke-width="1"/></svg>
<svg class="abs" style="left:1898px;top:1014px" width="13" height="13" viewBox="0 0 13 13"><rect x="0.5" y="0.5" width="11.5" height="9" fill="none" stroke="#333"/><path d="M0 11.5 H12.5" stroke="#333"/></svg>

<div id="taskbar"></div><div id="tbline"></div>
<!-- weather -->
<svg class="abs" style="left:19px;top:1042px" width="26" height="26" viewBox="0 0 26 26"><defs><radialGradient id="sun" cx="0.4" cy="0.4" r="0.6"><stop offset="0" stop-color="#ffc043"/><stop offset="1" stop-color="#f09a1a"/></radialGradient></defs><circle cx="11" cy="13" r="10" fill="url(#sun)"/><path d="M12 22 Q9 22 9 19.5 Q9 17 12 17 Q13 14 16.5 14 Q20 14 21 17.2 Q24 17.5 24 20 Q24 22 21.5 22Z" fill="#dfe6ee"/></svg>
<div class="abs" style="left:30px;top:1038px;width:16px;height:16px;border-radius:50%;background:#c42b1c;color:#fff;font-size:11px;line-height:16px;text-align:center;-webkit-text-stroke:0">2</div>
<div class="abs" style="left:50px;top:1041px;font-size:12px;line-height:15px;color:#1a1a1a">32°C</div>
<div class="abs" style="left:50px;top:1057px;font-size:12px;line-height:15px;color:#3a3a3a;letter-spacing:-0.3px"><i class="t">มีแดดส่วนใหญ่</i></div>
<!-- start -->
<svg class="abs" style="left:463px;top:1045px" width="23" height="23" viewBox="0 0 23 23"><defs><linearGradient id="wg" x1="0" y1="0" x2="1" y2="1"><stop offset="0" stop-color="#4cc2f5"/><stop offset="1" stop-color="#0a7ad4"/></linearGradient></defs><rect x="0" y="0" width="10.9" height="10.9" fill="url(#wg)"/><rect x="12.1" y="0" width="10.9" height="10.9" fill="url(#wg)"/><rect x="0" y="12.1" width="10.9" height="10.9" fill="url(#wg)"/><rect x="12.1" y="12.1" width="10.9" height="10.9" fill="url(#wg)"/></svg>
<!-- search pill -->
<div class="abs" style="left:500px;top:1040px;width:216px;height:32px;border-radius:16px;background:#fbfdfd;border:1px solid #dfe5e7"></div>
<svg class="abs" style="left:510px;top:1048px" width="16" height="16" viewBox="0 0 16 16"><circle cx="6.5" cy="6.5" r="5.3" fill="none" stroke="#1a1a1a" stroke-width="1.6"/><path d="M10.3 10.3 L15 15" stroke="#1a1a1a" stroke-width="1.8"/></svg>
<div class="abs" style="left:536px;top:1048px;font-size:14px;line-height:18px;color:#4a4a4a;-webkit-text-stroke:0.1px currentColor"><i class="t">การค้นหา</i></div>
<svg class="abs" style="left:665px;top:1043px" width="49" height="25" viewBox="0 0 49 25"><defs><linearGradient id="snow" x1="0" y1="0" x2="1" y2="1"><stop offset="0" stop-color="#3f86d6"/><stop offset="0.5" stop-color="#6ea4e0"/><stop offset="1" stop-color="#1f5fb8"/></linearGradient><clipPath id="sc"><ellipse cx="24.5" cy="12.5" rx="24" ry="12"/></clipPath></defs><ellipse cx="24.5" cy="12.5" rx="24" ry="12" fill="url(#snow)"/><g clip-path="url(#sc)" stroke="#dfeaf7" stroke-width="1.6" fill="none" opacity="0.85"><path d="M4 19 L12 15 L18 17 L26 12 L33 15 L40 9 L47 12"/><path d="M8 9 L16 6 L22 8"/><path d="M29 3 L31 14 M36 5 L35 16"/><path d="M2 23 L14 20 L24 22 L36 18 L48 20"/></g></svg>
<!-- task view -->
<svg class="abs" style="left:731px;top:1044px" width="24" height="24" viewBox="0 0 24 24"><rect x="6" y="1" width="17" height="17" rx="1.5" fill="#f3f3f3" stroke="#e2e2e2" stroke-width="0.6"/><rect x="1" y="7" width="17" height="16" rx="0.8" fill="#1c1c1c"/><rect x="6" y="7" width="12" height="11" fill="#c2c2c2"/></svg>
<!-- copilot -->
<svg class="abs" style="left:775px;top:1044px" width="24" height="22" viewBox="0 0 24 22"><defs><linearGradient id="cpa" x1="0.3" y1="0" x2="0.4" y2="1"><stop offset="0" stop-color="#1f9de8"/><stop offset="0.45" stop-color="#3fc36a"/><stop offset="0.75" stop-color="#f2c21c"/><stop offset="1" stop-color="#f05a30"/></linearGradient><linearGradient id="cpb" x1="0.5" y1="0" x2="0.6" y2="1"><stop offset="0" stop-color="#2a5ad0"/><stop offset="0.35" stop-color="#b55ce0"/><stop offset="0.7" stop-color="#f05a8a"/><stop offset="1" stop-color="#f7914a"/></linearGradient></defs><path d="M8 0.5 H17 Q14.5 1.5 13.5 4.5 L10 16.5 Q9 20 6 20 H3 Q0 20 0.5 16.5 L3 7 Q4.5 0.5 8 0.5Z" fill="url(#cpa)"/><path d="M10.5 18 L14 5.5 Q15 2 18 2 H20.5 Q24 2 23.5 5.5 L21 15 Q19.3 21.5 16 21.5 H7 Q9.5 20.5 10.5 18Z" fill="url(#cpb)"/><path d="M13.3 5 L9.8 17.5" stroke="#fff" stroke-width="1.3"/></svg>
<!-- explorer active -->
<div class="abs" style="left:812px;top:1039px;width:36px;height:36px;border-radius:4px;background:#f6fafb;border:1px solid #e6eced"></div>
<svg class="abs" style="left:819px;top:1045px" width="25" height="24" viewBox="0 0 25 24"><path d="M0 1.5 Q0 0 1.5 0 H8 L10 2 H23.5 Q25 2 25 3.5 V19 Q25 21 23 21 H2 Q0 21 0 19Z" fill="#d9a51a"/><path d="M0 5 H25 V19 Q25 21 23 21 H2 Q0 21 0 19Z" fill="#fbd650"/><rect x="4" y="14" width="17" height="10" rx="2.5" fill="#1f6fbf"/><rect x="6" y="16" width="13" height="2" rx="1" fill="#3a9ae6"/></svg>
<div class="abs" style="left:823px;top:1072px;width:16px;height:3px;border-radius:2px;background:#1f77c4"></div>
<!-- store -->
<svg class="abs" style="left:863px;top:1044px" width="23" height="24" viewBox="0 0 23 24"><path d="M7 5 Q7 1 11.5 1 Q16 1 16 5" fill="none" stroke="#1a5f9e" stroke-width="1.6"/><rect x="0" y="5" width="23" height="19" rx="3" fill="#1a5f9e"/><rect x="6.5" y="9.5" width="4.5" height="4.5" fill="#f25022"/><rect x="12" y="9.5" width="4.5" height="4.5" fill="#7fba00"/><rect x="6.5" y="15" width="4.5" height="4.5" fill="#00a4ef"/><rect x="12" y="15" width="4.5" height="4.5" fill="#ffb900"/></svg>
<!-- edge -->
<svg class="abs" style="left:907px;top:1044px" width="24" height="24" viewBox="0 0 24 24"><defs><linearGradient id="eg1" x1="0" y1="1" x2="0.8" y2="0"><stop offset="0" stop-color="#0b4f9a"/><stop offset="0.6" stop-color="#1d8fdc"/><stop offset="1" stop-color="#2fc0e0"/></linearGradient><linearGradient id="eg2" x1="0" y1="0" x2="1" y2="1"><stop offset="0" stop-color="#35c1f1"/><stop offset="1" stop-color="#66d86a"/></linearGradient></defs><circle cx="12" cy="12" r="11.5" fill="url(#eg1)"/><path d="M2 9 Q4 1 12 0.5 Q22 0.5 23.5 11 Q23.5 16 19 16 Q15 16 15 13 Q15 9 11 9 Q6 9 5 13Z" fill="url(#eg2)"/><path d="M5.5 14 Q6 9.5 11 9.5 Q14.5 9.5 14.5 13 Q14.5 16.5 19 16.5 Q16 21 11 20 Q6 19 5.5 14Z" fill="#fff" opacity="0.92"/><path d="M8 14.5 Q8.5 12 11 12 Q13 12 13 14 Q13 16.5 16 17.5 Q12 19 9.5 17.5 Q8 16.5 8 14.5Z" fill="#1d7fd0"/></svg>
<!-- outlook -->
<svg class="abs" style="left:951px;top:1045px" width="23" height="22" viewBox="0 0 23 22"><path d="M5 4 L14 0 L23 4 V20 Q23 22 21 22 H7 Q5 22 5 20Z" fill="#1aa0e8"/><path d="M5 8 L14 14 L23 8 V20 Q23 22 21 22 H7 Q5 22 5 20Z" fill="#2ec0f5"/><rect x="0" y="10" width="11" height="11" rx="1.5" fill="#0f5aa8"/><circle cx="5.5" cy="15.5" r="3" fill="none" stroke="#fff" stroke-width="1.5"/></svg>
<!-- MA -->
<svg class="abs" style="left:995px;top:1042px" width="27" height="26" viewBox="0 0 27 26"><rect x="0" y="4" width="24" height="22" fill="#1f6fd8"/><path d="M4 20 L10 10 H13 L7 20Z M10 20 L16 10 H19 L19.5 20 H17 L16.8 15 L13 20Z" fill="#e8f1ff"/><circle cx="22" cy="5" r="4.6" fill="#c4321d"/></svg>
<!-- drive -->
<svg class="abs" style="left:1040px;top:1046px" width="22" height="19" viewBox="0 0 22 19"><path d="M7.3 0 H14.7 L22 12.5 L18.3 19 L11 6.3Z" fill="#fbbc04"/><path d="M7.3 0 L11 6.3 L3.7 19 L0 12.5Z" fill="#0f9d58"/><path d="M3.7 19 H18.3 L22 12.5 H7.3Z" fill="#4285f4"/><path d="M18.3 19 L22 12.5 H16Z" fill="#ea4335"/></svg>
<!-- chrome SJ -->
<svg class="abs" style="left:1083px;top:1038px" width="30" height="30" viewBox="0 0 30 30"><circle cx="12" cy="18" r="11.5" fill="#db4437"/><path d="M12 18 L23.5 18 A11.5 11.5 0 0 1 6.25 27.96Z" fill="#f4c20d"/><path d="M12 18 L6.25 27.96 A11.5 11.5 0 0 1 2.05 12.25Z" fill="#0f9d58"/><circle cx="12" cy="18" r="5.2" fill="#fff"/><circle cx="12" cy="18" r="4" fill="#4285f4"/><circle cx="21" cy="8" r="7.5" fill="#6a9a3a"/><text x="21" y="11" font-family="Liberation Sans" font-size="8" fill="#e8f5d8" text-anchor="middle">SJ</text></svg>
<!-- ppt -->
<svg class="abs" style="left:1127px;top:1045px" width="24" height="24" viewBox="0 0 24 24"><circle cx="13" cy="11" r="11" fill="#e8593a"/><path d="M13 0 A11 11 0 0 1 24 11 H13Z" fill="#f5a04a"/><rect x="0" y="10" width="11" height="11" rx="1.5" fill="#c42b1c"/><text x="5.5" y="19" font-family="Liberation Sans" font-size="9" fill="#fff" text-anchor="middle">P</text></svg>
<!-- blue sq -->
<svg class="abs" style="left:1171px;top:1044px" width="24" height="24" viewBox="0 0 24 24"><path d="M1 1 H23 V23 H19 V5 H1Z" fill="#3a9ad8"/><path d="M5 9 H15 V23 H11 V13 H5Z" fill="#3a9ad8"/><path d="M19 5 V23 M15 13 V23" stroke="#1e6fb0" stroke-width="0.8"/></svg>
<!-- settings -->
<svg class="abs" style="left:1215px;top:1044px" width="24" height="24" viewBox="0 0 24 24"><path d="M10 0.5 H14 L14.8 3.8 L17.8 5.5 L21 4.5 L23 8 L20.6 10.3 V13.7 L23 16 L21 19.5 L17.8 18.5 L14.8 20.2 L14 23.5 H10 L9.2 20.2 L6.2 18.5 L3 19.5 L1 16 L3.4 13.7 V10.3 L1 8 L3 4.5 L6.2 5.5 L9.2 3.8Z" fill="#6e7378"/><circle cx="12" cy="12" r="5.6" fill="#fff"/><circle cx="12" cy="12" r="4.2" fill="#1f6fc0"/></svg>
<!-- feather -->
<svg class="abs" style="left:1264px;top:1045px" width="14" height="22" viewBox="0 0 14 22"><path d="M13 0.5 Q5 3 2 12 Q1 16 3 18 Q9 14 13 0.5Z" fill="#3d6aa8"/><path d="M13 0.5 Q6 9 3 21.5" stroke="#1a2a40" stroke-width="1" fill="none"/></svg>
<!-- capcut blue -->
<svg class="abs" style="left:1303px;top:1044px" width="24" height="24" viewBox="0 0 24 24"><rect x="0" y="0" width="24" height="24" rx="4" fill="#3d8ff0"/><path d="M4 17 L9 9 L12 13 L15 9 L20 17Z" fill="none" stroke="#fff" stroke-width="1.8" stroke-linejoin="round"/></svg>
<!-- black A -->
<svg class="abs" style="left:1347px;top:1044px" width="24" height="24" viewBox="0 0 24 24"><rect x="0" y="0" width="24" height="24" fill="#1c1c1c"/><defs><linearGradient id="ag" x1="0" y1="0" x2="0" y2="1"><stop offset="0" stop-color="#f58a50"/><stop offset="0.5" stop-color="#9a8ad0"/><stop offset="1" stop-color="#3f86e0"/></linearGradient></defs><path d="M3.5 20.5 Q8 14 12 3.5 Q16 14 20.5 20.5 Q17.5 19 15.5 16 Q13.5 12 12 9.5 Q10.5 12 8.5 16 Q6.5 19 3.5 20.5Z" fill="url(#ag)"/></svg>
<!-- chrome 2 -->
<svg class="abs" style="left:1391px;top:1038px" width="30" height="30" viewBox="0 0 30 30"><circle cx="12" cy="18" r="11.5" fill="#db4437"/><path d="M12 18 L23.5 18 A11.5 11.5 0 0 1 6.25 27.96Z" fill="#f4c20d"/><path d="M12 18 L6.25 27.96 A11.5 11.5 0 0 1 2.05 12.25Z" fill="#0f9d58"/><circle cx="12" cy="18" r="5.2" fill="#fff"/><circle cx="12" cy="18" r="4" fill="#4285f4"/><circle cx="22" cy="8" r="7.5" fill="#4a7ac0"/><path d="M17 10 Q21 6 27 9" stroke="#dfe8f5" stroke-width="1.5" fill="none"/></svg>
<!-- feather 2 -->
<svg class="abs" style="left:1440px;top:1045px" width="14" height="22" viewBox="0 0 14 22"><path d="M13 0.5 Q5 3 2 12 Q1 16 3 18 Q9 14 13 0.5Z" fill="#3d6aa8"/><path d="M13 0.5 Q6 9 3 21.5" stroke="#1a2a40" stroke-width="1" fill="none"/></svg>
<div class="abs" style="left:1004px;top:1072px;width:6px;height:3px;border-radius:2px;background:#8a8a8a"></div>
<div class="abs" style="left:1048px;top:1072px;width:6px;height:3px;border-radius:2px;background:#8a8a8a"></div>
<div class="abs" style="left:1092px;top:1072px;width:6px;height:3px;border-radius:2px;background:#8a8a8a"></div>
<div class="abs" style="left:1136px;top:1072px;width:6px;height:3px;border-radius:2px;background:#8a8a8a"></div>
<div class="abs" style="left:1180px;top:1072px;width:6px;height:3px;border-radius:2px;background:#8a8a8a"></div>
<div class="abs" style="left:1224px;top:1072px;width:6px;height:3px;border-radius:2px;background:#8a8a8a"></div>
<div class="abs" style="left:1268px;top:1072px;width:6px;height:3px;border-radius:2px;background:#8a8a8a"></div>
<div class="abs" style="left:1312px;top:1072px;width:6px;height:3px;border-radius:2px;background:#8a8a8a"></div>
<div class="abs" style="left:1356px;top:1072px;width:6px;height:3px;border-radius:2px;background:#8a8a8a"></div>
<div class="abs" style="left:1400px;top:1072px;width:6px;height:3px;border-radius:2px;background:#8a8a8a"></div>
<div class="abs" style="left:1444px;top:1072px;width:6px;height:3px;border-radius:2px;background:#8a8a8a"></div>

<!-- clock -->
<div class="abs" style="left:1800px;top:1041px;width:101px;text-align:right;font-size:12px;line-height:15px;color:#1a1a1a">16:37</div>
<div class="abs" style="left:1800px;top:1057px;width:101px;text-align:right;font-size:12px;line-height:15px;color:#1a1a1a">24/1/2569</div>

<!-- cursor -->
<svg class="abs" style="left:1368px;top:525px" width="15" height="22" viewBox="0 0 15 22"><path d="M1.5 1.5 V17.2 L5.2 13.8 L8 19.6 Q8.5 20.3 9.3 20 L10.2 19.6 Q10.9 19.2 10.6 18.4 L7.9 12.8 H12.7 Z" fill="#fff" stroke="#111" stroke-width="1.1" stroke-linejoin="round"/></svg>
</body></html>
